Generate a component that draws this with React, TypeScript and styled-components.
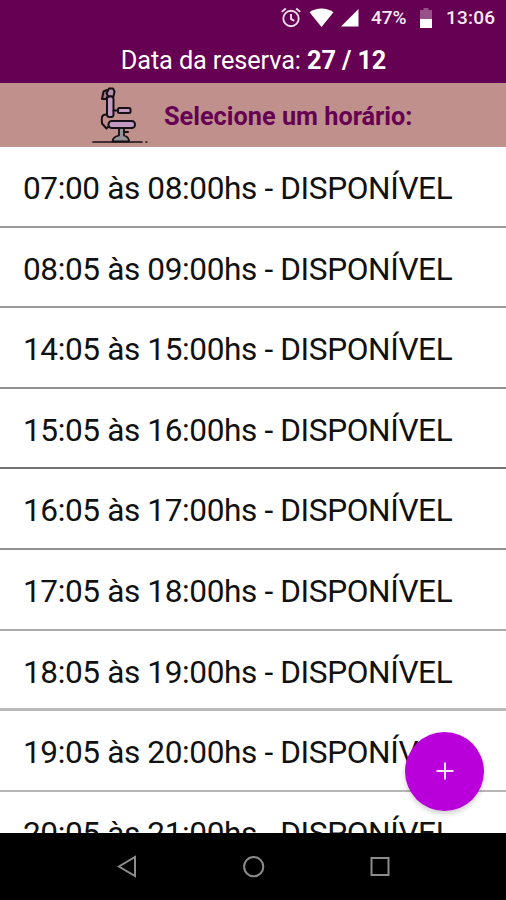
import React from 'react';
import styled, { createGlobalStyle } from 'styled-components';

const GlobalStyle = createGlobalStyle`
  * { box-sizing: border-box; }
  body { margin: 0; background: #000; }
`;

const Screen = styled.div`
  position: relative;
  display: flex;
  flex-direction: column;
  width: 506px;
  height: 900px;
  overflow: hidden;
  background: #fff;
  font-family: Roboto, sans-serif;
`;

const StatusBar = styled.div`
  display: flex;
  flex: none;
  align-items: center;
  justify-content: flex-end;
  height: 36px;
  padding-right: 9px;
  background: #660053;
  color: #f6e9f4;
  font-size: 19px;
  font-weight: 500;
  line-height: 36px;
`;

const StatusIcon = styled.svg<{ $gap: number }>`
  flex: none;
  margin-right: ${(p) => p.$gap}px;
`;

const Battery = styled.span`
  width: 61px;
  flex: none;
  display: flex;
  align-items: center;
  justify-content: space-between;
  letter-spacing: -0.1px;
`;

const Clock = styled.span`
  width: 51px;
  margin-left: 14px;
  letter-spacing: 0.2px;
  white-space: nowrap;
`;

const TitleBar = styled.header`
  flex: none;
  height: 47px;
  padding: 1px 0 0 1px;
  background: #660053;
  color: #fff;
  font-size: 25.3px;
  letter-spacing: -0.12px;
  line-height: 47px;
  text-align: center;
`;

const Prompt = styled.div`
  display: flex;
  flex: none;
  align-items: center;
  height: 64px;
  padding-left: 90px;
  background: #c0908d;
`;

const PromptText = styled.h1`
  margin: 4px 0 0 14px;
  color: #660053;
  font-size: 25.3px;
  font-weight: 700;
  line-height: 30px;
  white-space: nowrap;
`;

const SlotList = styled.ul`
  flex: 1;
  min-height: 0;
  margin: 0;
  padding: 0;
  overflow: hidden;
  list-style: none;
`;

const Slot = styled.li<{ $line: string; $weight: number }>`
  height: 80.6px;
  padding: 0 24px 0 23px;
  border-bottom: ${(p) => p.$weight}px solid ${(p) => p.$line};
  color: #111;
  font-size: 31.6px;
  letter-spacing: -0.39px;
  line-height: 83px;
  white-space: nowrap;
`;

const AddButton = styled.button`
  position: absolute;
  left: 405px;
  top: 732px;
  display: flex;
  align-items: center;
  justify-content: center;
  width: 79px;
  height: 79px;
  padding: 0 0 1px;
  border: 0;
  border-radius: 50%;
  background: #b900db;
  box-shadow: 0 3px 5px rgba(0, 0, 0, 0.18);
`;

const NavBar = styled.nav`
  display: flex;
  flex: none;
  align-items: flex-start;
  justify-content: space-between;
  height: 67px;
  padding: 22px 115px 0 116px;
  background: #000;
`;

const slots = [
  { start: '07:00', end: '08:00', line: '#999', weight: 2 },
  { start: '08:05', end: '09:00', line: '#999', weight: 2 },
  { start: '14:05', end: '15:00', line: '#909090', weight: 2 },
  { start: '15:05', end: '16:00', line: '#747474', weight: 2 },
  { start: '16:05', end: '17:00', line: '#8f8f8f', weight: 2 },
  { start: '17:05', end: '18:00', line: '#aaa', weight: 2 },
  { start: '18:05', end: '19:00', line: '#bababa', weight: 3 },
  { start: '19:05', end: '20:00', line: '#b5b5b5', weight: 2 },
  { start: '20:05', end: '21:00', line: '#999', weight: 2 },
];

const AlarmIcon = () => (
  <StatusIcon $gap={7} width="22" height="22" viewBox="0 0 22 22" fill="none" stroke="#f0dcec" strokeWidth="1.9">
    <circle cx="11" cy="11.500" r="7.700" />
    <path d="M11 7.100v4.800l3.200 2M1.800 4.900l4-3.400M20.200 4.900l-4-3.400" />
  </StatusIcon>
);

const WifiIcon = () => (
  <StatusIcon $gap={7} width="25" height="22" viewBox="0 0 25 22" fill="#fff">
    <path d="M.5 5.200C7.500.2 17.500.2 24.500 5.200L12.500 20Z" />
  </StatusIcon>
);

const SignalIcon = () => (
  <StatusIcon $gap={12} width="18" height="20" viewBox="0 0 18 20" fill="#fff">
    <path d="M17.500 1v17.500H0Z" />
  </StatusIcon>
);

const BatteryIcon = () => (
  <svg width="12" height="22" viewBox="0 0 12 22">
    <path d="M3.500 1h5v2H12v9H0V3h3.500Z" fill="#985088" />
    <path d="M0 12h12v9H0Z" fill="#fff" />
  </svg>
);

const SalonChair = () => (
  <svg width="60" height="60" viewBox="0 0 60 60" stroke="#171016" strokeWidth="2" strokeLinejoin="round" strokeLinecap="round">
    <path d="M17 5 13.500 6.500 12 14h4l2-3" fill="#a97986" />
    <path d="M19 3.500h4l1.500 3-1 5h-5l-2-3Z" fill="#b991b1" />
    <rect x="17" y="11.500" width="6.500" height="20.500" rx="2.500" fill="#c39ac2" />
    <path d="M23.500 25.500h5" fill="none" />
    <rect x="28" y="23" width="12.500" height="5" rx="1.500" fill="#c39ac2" />
    <path d="M16 29.500c-4.500 0-4.500 3-4 9l4.500 5 3-3" fill="none" />
    <rect x="18.500" y="36" width="26.500" height="7" rx="3.300" fill="#c39ac2" />
    <path d="M29 43h5v7.500c3.500 1 5 2.500 5 6H22.500c0-3.500 2.500-5 6.500-6Z" fill="#949295" strokeWidth="1.800" />
    <path d="M34.500 47h3.500" fill="none" />
    <path d="M3 57h49M56 57h.7" fill="none" strokeWidth="1.700" />
  </svg>
);

export default function App() {
  return (
    <>
      <GlobalStyle />
      <Screen>
        <StatusBar>
          <AlarmIcon />
          <WifiIcon />
          <SignalIcon />
          <Battery>
            47%
            <BatteryIcon />
          </Battery>
          <Clock>13:06</Clock>
        </StatusBar>
        <TitleBar>
          Data da reserva: <b>27 / 12</b>
        </TitleBar>
        <Prompt>
          <SalonChair />
          <PromptText>Selecione um horário:</PromptText>
        </Prompt>
        <SlotList>
          {slots.map(({ start, end, line, weight }) => (
            <Slot key={start} $line={line} $weight={weight}>
              {start} às {end}hs - DISPONÍVEL
            </Slot>
          ))}
        </SlotList>
        <AddButton aria-label="Adicionar">
          <svg width="20" height="20" viewBox="0 0 20 20" stroke="#ffe8ff" strokeWidth="2">
            <path d="M10 1.500v17M1.500 10h17" />
          </svg>
        </AddButton>
        <NavBar>
          <svg width="22" height="24" viewBox="0 0 22 24" fill="none" stroke="#8c8c8c" strokeWidth="2">
            <path d="M19 2v19L3 11.500Z" />
          </svg>
          <svg width="24" height="24" viewBox="0 0 24 24" fill="none" stroke="#8c8c8c" strokeWidth="2">
            <circle cx="11.700" cy="11.700" r="9.600" />
          </svg>
          <svg width="22" height="24" viewBox="0 0 22 24" fill="none" stroke="#8c8c8c" strokeWidth="2">
            <rect x="2.500" y="3" width="17" height="17" />
          </svg>
        </NavBar>
      </Screen>
    </>
  );
}
